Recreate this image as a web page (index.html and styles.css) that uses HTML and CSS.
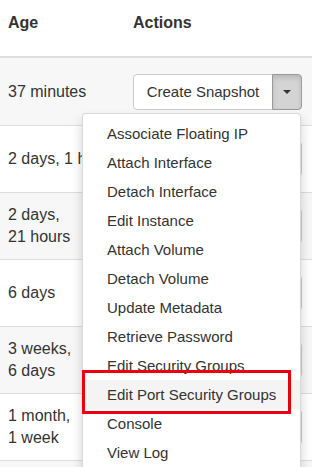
FILE: index.html
```html
<!DOCTYPE html>
<html lang="en">
<head>
    <meta charset="UTF-8">
    <meta name="viewport" content="width=device-width, initial-scale=1.0">
    <title>Instances</title>
    <link rel="stylesheet" href="styles.css">
</head>
<body>
    <div class="table">
        <div class="table-head">
            <div class="cell cell--age">Age</div>
            <div class="cell cell--actions">Actions</div>
        </div>

        <div class="table-row table-row--odd">
            <div class="cell cell--age">37 minutes</div>
            <div class="cell cell--actions">
                <div class="btn-group">
                    <button class="btn">Create Snapshot</button>
                    <button class="btn btn--toggle btn--active"><span class="caret"></span></button>
                    <ul class="dropdown-menu">
                        <li>Associate Floating IP</li>
                        <li>Attach Interface</li>
                        <li>Detach Interface</li>
                        <li>Edit Instance</li>
                        <li>Attach Volume</li>
                        <li>Detach Volume</li>
                        <li>Update Metadata</li>
                        <li>Retrieve Password</li>
                        <li>Edit Security Groups</li>
                        <li class="is-hover">Edit Port Security Groups</li>
                        <li>Console</li>
                        <li>View Log</li>
                    </ul>
                </div>
            </div>
        </div>

        <div class="table-row">
            <div class="cell cell--age">2 days, 1 hour</div>
            <div class="cell cell--actions">
                <div class="btn-group">
                    <button class="btn">Create Snapshot</button>
                    <button class="btn btn--toggle"><span class="caret"></span></button>
                </div>
            </div>
        </div>

        <div class="table-row table-row--odd">
            <div class="cell cell--age">2 days,<br>21 hours</div>
            <div class="cell cell--actions">
                <div class="btn-group">
                    <button class="btn">Create Snapshot</button>
                    <button class="btn btn--toggle"><span class="caret"></span></button>
                </div>
            </div>
        </div>

        <div class="table-row">
            <div class="cell cell--age">6 days</div>
            <div class="cell cell--actions">
                <div class="btn-group">
                    <button class="btn">Create Snapshot</button>
                    <button class="btn btn--toggle"><span class="caret"></span></button>
                </div>
            </div>
        </div>

        <div class="table-row table-row--odd">
            <div class="cell cell--age">3 weeks,<br>6 days</div>
            <div class="cell cell--actions">
                <div class="btn-group">
                    <button class="btn">Create Snapshot</button>
                    <button class="btn btn--toggle"><span class="caret"></span></button>
                </div>
            </div>
        </div>

        <div class="table-row">
            <div class="cell cell--age">1 month,<br>1 week</div>
            <div class="cell cell--actions">
                <div class="btn-group">
                    <button class="btn">Create Snapshot</button>
                    <button class="btn btn--toggle"><span class="caret"></span></button>
                </div>
            </div>
        </div>

        <div class="table-row table-row--odd"></div>

        <div class="highlight-box"></div>
    </div>
</body>
</html>
```

FILE: styles.css
```css
body {
    margin: 0;
    font-family: "Liberation Sans", Arial, sans-serif;
    font-size: 16px;
    line-height: 22px;
    color: #333;
    background-color: white;
    overflow: hidden;
}
.table {
    position: relative;
    width: 312px;
}
.table-head {
    display: flex;
    height: 58px;
    box-sizing: border-box;
    border-bottom: 2px solid #ddd;
    font-weight: bold;
    padding-top: 12px;
}
.table-row {
    display: flex;
    align-items: center;
    height: 67px;
    box-sizing: border-box;
    border-top: 1px solid #ddd;
}
.table-head + .table-row {
    border-top: none;
}
.table-row--odd {
    background-color: #f7f7f7;
}
.cell--age {
    flex: none;
    width: 125px;
    box-sizing: border-box;
    padding: 0 8px;
    white-space: nowrap;
    overflow: hidden;
}
.cell--actions {
    flex: none;
    padding-left: 8px;
}
.btn-group {
    position: relative;
    display: flex;
}
.btn {
    flex: none;
    width: 140px;
    height: 36px;
    margin: 0;
    padding: 0;
    font-family: inherit;
    font-size: 15px;
    white-space: nowrap;
    color: #333;
    background-color: white;
    border: 1px solid #ccc;
    border-radius: 4px 0 0 4px;
    cursor: pointer;
}
.btn--toggle {
    width: 30px;
    margin-left: -1px;
    border-radius: 0 4px 4px 0;
    display: flex;
    align-items: center;
    justify-content: center;
}
.btn--active {
    background-color: #d4d4d4;
    border-color: #9a9a9a;
    box-shadow: inset 0 3px 5px rgba(0, 0, 0, 0.125);
}
.caret {
    width: 0;
    height: 0;
    border-top: 4px solid #333;
    border-left: 4px solid transparent;
    border-right: 4px solid transparent;
}
.dropdown-menu {
    position: absolute;
    top: 39px;
    left: -51px;
    z-index: 10;
    width: 219px;
    box-sizing: border-box;
    margin: 0;
    padding: 5px 0;
    list-style: none;
    font-size: 15px;
    background-color: white;
    border: 1px solid rgba(0, 0, 0, 0.15);
    border-radius: 4px;
    box-shadow: 0 6px 12px rgba(0, 0, 0, 0.175);
}
.dropdown-menu li {
    padding: 3px 0 3px 24px;
    line-height: 23px;
    white-space: nowrap;
}
.dropdown-menu li.is-hover {
    background-color: #f4f4f4;
}
.highlight-box {
    position: absolute;
    left: 82px;
    top: 370px;
    width: 209px;
    height: 44px;
    box-sizing: border-box;
    border: 3px solid #e8000d;
    z-index: 20;
}
```
